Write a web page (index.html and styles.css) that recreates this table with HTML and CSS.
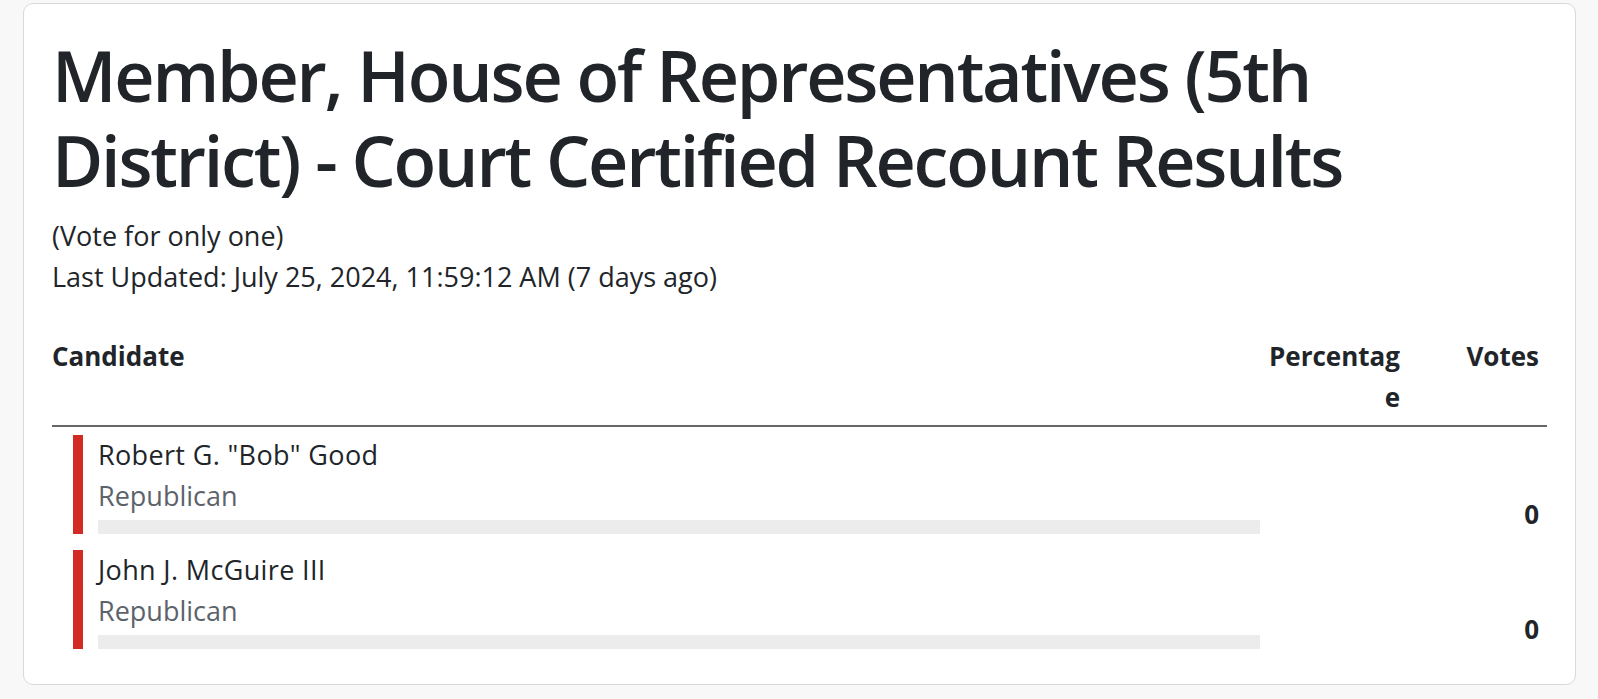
FILE: index.html
```html
<!DOCTYPE html>
<html lang="en">
<head>
<meta charset="utf-8">
<title>Member, House of Representatives (5th District) - Court Certified Recount Results</title>
<link rel="stylesheet" href="styles.css">
</head>
<body>
<div class="card">
  <h1 class="contest-title">Member, House of Representatives (5th District) - Court Certified Recount Results</h1>
  <div class="meta">(Vote for only one)</div>
  <div class="meta">Last Updated: July 25, 2024, 11:59:12 AM (7 days ago)</div>
  <table class="results">
    <colgroup>
      <col class="col-candidate">
      <col class="col-pct">
      <col class="col-votes">
    </colgroup>
    <thead>
      <tr>
        <th class="th-candidate">Candidate</th>
        <th class="th-num th-pct">Percentage</th>
        <th class="th-num">Votes</th>
      </tr>
    </thead>
    <tbody>
      <tr>
        <td class="td-candidate">
          <div class="cand">
            <div class="cand-name">Robert G. "Bob" Good</div>
            <div class="cand-party">Republican</div>
            <div class="bar"><div class="bar-fill" style="width:0%"></div></div>
          </div>
        </td>
        <td class="td-num td-pct"></td>
        <td class="td-num">0</td>
      </tr>
      <tr>
        <td class="td-candidate">
          <div class="cand">
            <div class="cand-name">John J. McGuire III</div>
            <div class="cand-party">Republican</div>
            <div class="bar"><div class="bar-fill" style="width:0%"></div></div>
          </div>
        </td>
        <td class="td-num td-pct"></td>
        <td class="td-num">0</td>
      </tr>
    </tbody>
  </table>
</div>
</body>
</html>
```
FILE: styles.css
```css
html, body {
  margin: 0;
  padding: 0;
  background: #f8f8f8;
}
body {
  font-family: "Open Sans", "Noto Sans", sans-serif;
  color: #212529;
  font-size: 27px;
  line-height: 40.5px;
  padding: 3px 22px 14px 23px;
}
.card {
  background: #fff;
  border: 1px solid #d9d9d9;
  border-radius: 10px;
  padding: 25px 28px 27px;
}
.contest-title {
  margin: 4px 0 0;
  font-size: 70px;
  line-height: 85px;
  font-weight: 600;
  letter-spacing: -2.2px;
  color: #212529;
}
.meta {
  font-size: 27px;
  line-height: 40.5px;
}
.contest-title + .meta {
  margin-top: 13px;
}
.results {
  width: 100%;
  margin-top: 31px;
  border-collapse: collapse;
  table-layout: fixed;
}
.col-pct { width: 148px; }
.col-votes { width: 139px; }
.results th {
  font-size: 26px;
  font-weight: 700;
  line-height: 40.5px;
  padding: 8px;
  vertical-align: top;
  border-bottom: 2px solid #666;
  overflow-wrap: anywhere;
}
.results th.th-candidate {
  text-align: left;
  padding-left: 0;
}
.th-num { text-align: right; }
.results th.th-pct,
.results td.td-pct {
  padding-left: 4px;
}
.results td {
  padding: 8px;
}
.results td.td-candidate {
  padding-left: 0;
  padding-right: 0;
}
.cand {
  margin-left: 21px;
  border-left: 10px solid #d12b24;
  padding-left: 15px;
}
.cand-name {
  font-weight: 500;
  letter-spacing: 0.35px;
  color: #212529;
}
.cand-party {
  color: #5c636a;
}
.bar {
  margin-top: 4px;
  height: 14px;
  background: #ececec;
}
.bar-fill {
  height: 100%;
  background: #d12b24;
}
.td-num {
  text-align: right;
  vertical-align: bottom;
  font-size: 26px;
  font-weight: 700;
}
```
